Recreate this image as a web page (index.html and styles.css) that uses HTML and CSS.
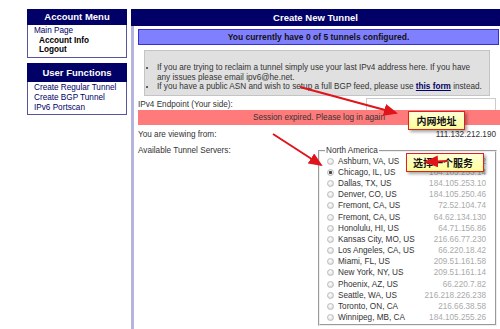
FILE: index.html
```html
<!DOCTYPE html>
<html>
<head>
    <title>Create New Tunnel</title>
    <link rel="stylesheet" href="styles.css">
</head>
<body>

<div class="page">
    <div class="sidebar">
        <div class="menu">
            <div class="menu-head">Account Menu</div>
            <a class="top" href="#">Main Page</a>
            <a class="sub" href="#">Account Info</a>
            <a class="sub" href="#">Logout</a>
        </div>
        <div class="menu">
            <div class="menu-head">User Functions</div>
            <a class="top" href="#">Create Regular Tunnel</a>
            <a class="top" href="#">Create BGP Tunnel</a>
            <a class="top" href="#">IPv6 Portscan</a>
        </div>
    </div>

    <div class="main">
        <div class="main-head">Create New Tunnel</div>
        <div class="main-body">
            <div class="count">You currently have 0 of 5 tunnels configured.</div>

            <div class="notes">
                <ul>
                    <li>If you are trying to reclaim a tunnel simply use your last IPv4 address here. If you have any issues please email ipv6@he.net.</li>
                    <li>If you have a public ASN and wish to setup a full BGP feed, please use <a href="#">this form</a> instead.</li>
                </ul>
            </div>

            <div class="row endpoint">
                <span>IPv4 Endpoint (Your side):</span>
                <input type="text" class="ip-input">
            </div>
            <div class="expired">Session expired. Please log in again</div>

            <div class="row viewing">
                <span>You are viewing from:</span>
                <span>111.132.212.190</span>
            </div>

            <div class="row servers">
                <span>Available Tunnel Servers:</span>
                <fieldset>
                    <legend>North America</legend>
                    <label><input type="radio" name="srv"><span class="city">Ashburn, VA, US</span><span class="addr">216.66.22.2</span></label>
                    <label><input type="radio" name="srv" checked><span class="city">Chicago, IL, US</span><span class="addr">184.105.253.14</span></label>
                    <label><input type="radio" name="srv"><span class="city">Dallas, TX, US</span><span class="addr">184.105.253.10</span></label>
                    <label><input type="radio" name="srv"><span class="city">Denver, CO, US</span><span class="addr">184.105.250.46</span></label>
                    <label><input type="radio" name="srv"><span class="city">Fremont, CA, US</span><span class="addr">72.52.104.74</span></label>
                    <label><input type="radio" name="srv"><span class="city">Fremont, CA, US</span><span class="addr">64.62.134.130</span></label>
                    <label><input type="radio" name="srv"><span class="city">Honolulu, HI, US</span><span class="addr">64.71.156.86</span></label>
                    <label><input type="radio" name="srv"><span class="city">Kansas City, MO, US</span><span class="addr">216.66.77.230</span></label>
                    <label><input type="radio" name="srv"><span class="city">Los Angeles, CA, US</span><span class="addr">66.220.18.42</span></label>
                    <label><input type="radio" name="srv"><span class="city">Miami, FL, US</span><span class="addr">209.51.161.58</span></label>
                    <label><input type="radio" name="srv"><span class="city">New York, NY, US</span><span class="addr">209.51.161.14</span></label>
                    <label><input type="radio" name="srv"><span class="city">Phoenix, AZ, US</span><span class="addr">66.220.7.82</span></label>
                    <label><input type="radio" name="srv"><span class="city">Seattle, WA, US</span><span class="addr">216.218.226.238</span></label>
                    <label><input type="radio" name="srv"><span class="city">Toronto, ON, CA</span><span class="addr">216.66.38.58</span></label>
                    <label><input type="radio" name="srv"><span class="city">Winnipeg, MB, CA</span><span class="addr">184.105.255.26</span></label>
                </fieldset>
            </div>
        </div>
    </div>
</div>

<!-- screenshot annotations -->
<div class="callout callout-lan">内网地址</div>
<div class="callout callout-pick">选择一个服务</div>

<svg class="arrows" width="500" height="329" viewBox="0 0 500 329">
    <defs>
        <marker id="head" markerWidth="7" markerHeight="6" refX="6" refY="3" orient="auto" markerUnits="strokeWidth">
            <path d="M0,0 L7,3 L0,6 Z" fill="#e0141a"/>
        </marker>
    </defs>
    <line x1="300" y1="87" x2="396" y2="113" stroke="#e0141a" stroke-width="2" marker-end="url(#head)"/>
    <line x1="273" y1="134" x2="321" y2="165" stroke="#e0141a" stroke-width="2" marker-end="url(#head)"/>
    <line x1="447" y1="161" x2="426" y2="162" stroke="#e0141a" stroke-width="2" marker-end="url(#head)"/>
</svg>

</body>
</html>
```

FILE: styles.css
```css
html, body {
    margin: 0;
    overflow: hidden;
}
body {
    width: 500px;
    height: 329px;
    font-family: "Liberation Sans", Arial, sans-serif;
    font-size: 8.2px;
    color: #333;
    background: #fff;
    position: relative;
}
a {
    color: #000066;
    text-decoration: none;
}

.page {
    display: flex;
    gap: 4px;
    height: 100%;
    box-sizing: border-box;
    padding: 9px 0 0 27px;
}

/* left menus */
.sidebar {
    width: 100px;
    flex: none;
    display: flex;
    flex-direction: column;
    gap: 5px;
}
.menu {
    border: 1px solid #555599;
    display: flex;
    flex-direction: column;
    padding-bottom: 2px;
    line-height: 9.7px;
}
.menu-head {
    background: #000066;
    color: #fff;
    font-weight: bold;
    font-size: 9.5px;
    text-align: center;
    line-height: 16px;
    margin: -1px -1px 1px -1px;
}
.menu + .menu .menu-head {
    line-height: 19px;
}
.menu a.top {
    padding-left: 6px;
}
.menu a.sub {
    padding-left: 11px;
    color: #000;
    font-weight: bold;
}

/* main panel */
.main {
    flex: 1;
    display: flex;
    flex-direction: column;
}
.main-head {
    background: #000066;
    color: #fff;
    font-weight: bold;
    font-size: 9.5px;
    text-align: center;
    line-height: 17px;
}
.main-body {
    flex: 1;
    border-left: 3px solid #b4b4dc;
    padding: 3px 1px 0 4px;
}
.count {
    background: #8080ff;
    border: 1px solid #3333cc;
    color: #111;
    font-weight: bold;
    font-size: 8.5px;
    text-align: center;
    line-height: 14px;
}
.notes {
    background: #e0e0e0;
    border: 1px solid #c4c4c4;
    margin: 5px 9px 0 6px;
    padding: 12px 6px 3px 0;
}
.notes ul {
    margin: 0;
    padding-left: 12px;
    line-height: 9.5px;
}
.notes a {
    font-weight: bold;
    text-decoration: underline;
}

.row {
    display: flex;
    justify-content: space-between;
}
.endpoint {
    margin-top: 2px;
    align-items: flex-end;
}
.endpoint span {
    padding-bottom: 1px;
}
.ip-input {
    width: 130px;
    height: 12px;
    box-sizing: border-box;
    border: 1px solid #ccc;
    border-bottom: none;
    margin: 0 3px 0 0;
    padding: 0;
}
.expired {
    background: #ff7b7b;
    margin-right: -1px;
    line-height: 15px;
    text-align: center;
}
.viewing {
    margin-top: 4px;
    line-height: 12px;
    padding-right: 3px;
}
.servers {
    margin-top: 4px;
    align-items: flex-start;
}
.servers > span {
    line-height: 12px;
}

fieldset {
    width: 179px;
    box-sizing: border-box;
    margin: 1px 2px 0 0;
    padding: 0 9px 1px 6px;
    border: 2px groove #eee;
    display: flex;
    flex-direction: column;
}
legend {
    padding: 0 1px;
    margin-left: -1px;
    line-height: 10px;
}
fieldset label {
    display: flex;
    align-items: center;
    height: 11.2px;
}
fieldset input[type=radio] {
    appearance: none;
    width: 7px;
    height: 7px;
    margin: 0 4px 0 1px;
    border-radius: 50%;
    border: 1px solid #bbb;
    background: radial-gradient(circle at 40% 35%, #fff, #d4d4d4);
    box-sizing: border-box;
}
fieldset input[type=radio]:checked {
    background: radial-gradient(circle, #444 0 1.3px, #ececec 1.9px);
}
.city {
    flex: 1;
}
.addr {
    color: #aaa;
}

/* annotations over the screenshot */
.callout {
    position: absolute;
    background: linear-gradient(#ffffd8, #ffff99);
    border: 1px solid #e02020;
    box-shadow: 2px 2px 3px rgba(0, 0, 0, 0.35);
    font-family: "Noto Sans CJK SC", sans-serif;
    font-weight: bold;
    font-size: 10px;
    color: #111;
    line-height: 17px;
}
.callout-lan {
    left: 408px;
    top: 111px;
    width: 55px;
    text-align: center;
}
.callout-pick {
    left: 406px;
    top: 153px;
    width: 78px;
    padding-left: 6px;
    box-sizing: border-box;
}
.arrows {
    position: absolute;
    left: 0;
    top: 0;
    pointer-events: none;
}
```
